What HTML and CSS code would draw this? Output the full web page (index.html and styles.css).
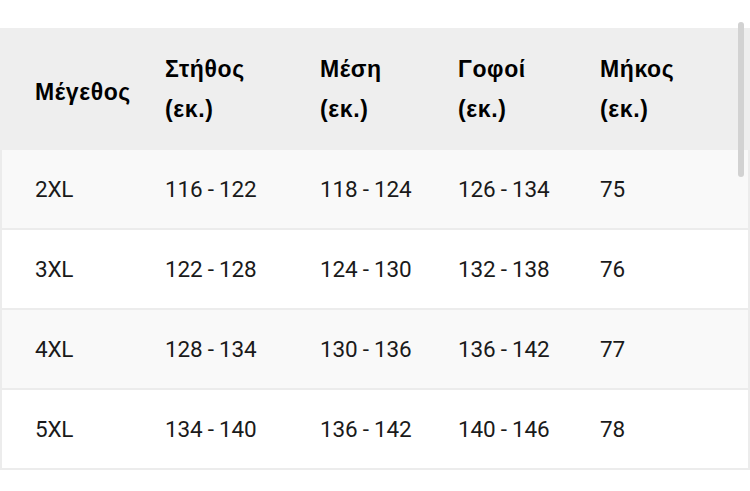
FILE: index.html
```html
<!DOCTYPE html>
<html lang="el">
<head>
<meta charset="utf-8">
<title>Μεγέθη</title>
<link rel="stylesheet" href="styles.css">
</head>
<body>
<div class="wrap">
  <div class="size-table">
    <div class="row head">
      <div class="cell first single">Μέγεθος</div>
      <div class="cell">Στήθος<br>(εκ.)</div>
      <div class="cell">Μέση<br>(εκ.)</div>
      <div class="cell">Γοφοί<br>(εκ.)</div>
      <div class="cell">Μήκος<br>(εκ.)</div>
    </div>
    <div class="row body alt">
      <div class="cell first">2XL</div>
      <div class="cell">116 - 122</div>
      <div class="cell">118 - 124</div>
      <div class="cell">126 - 134</div>
      <div class="cell">75</div>
    </div>
    <div class="row body">
      <div class="cell first">3XL</div>
      <div class="cell">122 - 128</div>
      <div class="cell">124 - 130</div>
      <div class="cell">132 - 138</div>
      <div class="cell">76</div>
    </div>
    <div class="row body alt">
      <div class="cell first">4XL</div>
      <div class="cell">128 - 134</div>
      <div class="cell">130 - 136</div>
      <div class="cell">136 - 142</div>
      <div class="cell">77</div>
    </div>
    <div class="row body">
      <div class="cell first">5XL</div>
      <div class="cell">134 - 140</div>
      <div class="cell">136 - 142</div>
      <div class="cell">140 - 146</div>
      <div class="cell">78</div>
    </div>
  </div>
  <div class="scroll-thumb"></div>
</div>
</body>
</html>
```
FILE: styles.css
```css
* { box-sizing: border-box; }
html, body { margin: 0; padding: 0; background: #ffffff; }
.wrap {
  position: relative;
  width: 750px;
  padding-top: 28px;
}
.size-table {
  width: 750px;
}
.row {
  display: grid;
  grid-template-columns: 128px 155px 138px 142px 1fr;
  align-items: center;
  border-left: 2px solid #ececec;
  border-right: 2px solid #ececec;
}
.head {
  height: 122px;
  background: #eeeeee;
  border-color: #eeeeee;
  font-family: "Liberation Sans", Arial, sans-serif;
  font-weight: 700;
  font-size: 23px;
  letter-spacing: 0.6px;
  line-height: 40px;
  color: #000000;
}
.head .single { padding-top: 6px; }
.body {
  height: 80px;
  border-bottom: 2px solid #ececec;
  background: #ffffff;
  font-family: Roboto, "Noto Sans", sans-serif;
  font-size: 22.5px;
  letter-spacing: -0.2px;
  color: #1a1a1a;
}
.body.alt { background: #f9f9f9; }
.cell { padding-left: 35px; white-space: nowrap; }
.cell.first { padding-left: 33px; }
.scroll-thumb {
  position: absolute;
  top: 22px;
  left: 738px;
  width: 6px;
  height: 155px;
  border-radius: 3px;
  background: #d2d2d2;
}
```
